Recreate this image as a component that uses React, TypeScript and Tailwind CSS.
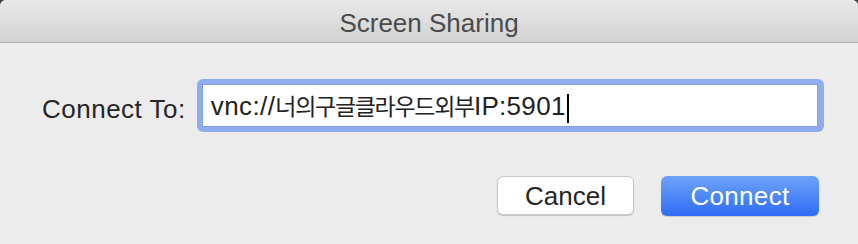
export default function App() {
  return (
    <div className="w-[858px] h-[244px] bg-[#3c3c3c] overflow-hidden font-['Liberation_Sans',Arial,sans-serif]">
      <div className="w-full h-full rounded-t-[6px] overflow-hidden bg-[#ececec] flex flex-col">
        {/* title bar */}
        <div className="h-[43px] shrink-0 flex items-center justify-center pt-[3px] bg-gradient-to-b from-[#e8e8e8] to-[#d2d2d2] border-b border-[#acacac]">
          <span className="text-[26px] leading-[30px] text-[#4b4b4b]">Screen Sharing</span>
        </div>

        {/* connect row */}
        <div className="flex items-start pl-[42px] pt-[36px]">
          <span className="mt-[15px] text-[26px] leading-[30px] tracking-[0.5px] text-[#262626]">Connect To:</span>
          <div className="ml-[11px] w-[627px] h-[53px] rounded-[6px] bg-[#8fadee] pl-[5px] pr-[6px] py-[5px]">
            <div className="w-full h-full bg-white border border-[#7f9ee3] pl-[8px] pt-[5px] text-[26px] leading-[30px] text-[#222] whitespace-nowrap">
              <span className="tracking-[0.4px]">vnc://</span>
              <span className="text-[23px] tracking-[-1.3px] font-['Noto_Sans_CJK_KR',sans-serif]">너의구글클라우드외부</span>
              <span className="tracking-[0.3px]">IP:5901</span>
              <span className="inline-block w-[2px] h-[29px] bg-black align-middle ml-[1px]" />
            </div>
          </div>
        </div>

        {/* buttons */}
        <div className="flex justify-end gap-[27px] pr-[39px] pt-[44px]">
          <button className="w-[137px] h-[39px] rounded-[6px] bg-white border border-[#c9c9c9] shadow-[0_1px_1px_rgba(0,0,0,0.18)] text-[26px] leading-[30px] text-[#262626]">
            Cancel
          </button>
          <button className="w-[158px] h-[40px] rounded-[6px] bg-gradient-to-b from-[#6fa2f8] to-[#2e6cf5] shadow-[0_1px_1px_rgba(0,0,0,0.15)] text-[26px] leading-[30px] tracking-[0.3px] text-white">
            Connect
          </button>
        </div>
      </div>
    </div>
  );
}
